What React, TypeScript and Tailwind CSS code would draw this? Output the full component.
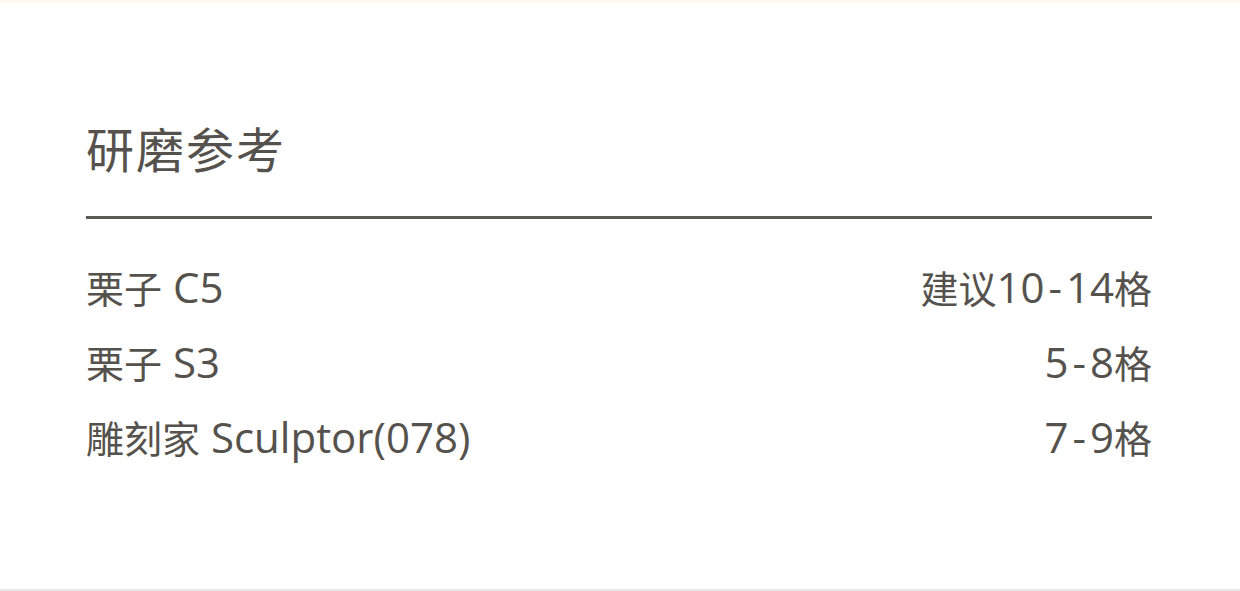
function Mixed({ text }: { text: string }) {
  const parts = text.match(/[\u3000-\u9fff]+|-|[^\u3000-\u9fff-]+/g) || [];
  return (
    <span>
      {parts.map((p, i) =>
        /[\u3000-\u9fff]/.test(p) ? (
          <span key={i} className="text-[38px]">{p}</span>
        ) : p === "-" ? (
          <span key={i} className="text-[42px] mx-[4px]" style={{ fontFamily: '"Open Sans", sans-serif' }}>{p}</span>
        ) : (
          <span key={i} className="text-[42px]" style={{ fontFamily: '"Open Sans", sans-serif' }}>{p}</span>
        )
      )}
    </span>
  );
}

export default function App() {
  const rows = [
    { l: "栗子 C5", r: "建议10-14格" },
    { l: "栗子 S3", r: "5-8格" },
    { l: "雕刻家 Sculptor(078)", r: "7-9格" },
  ];
  return (
    <div
      className="w-[1240px] h-[591px] bg-white flex flex-col border-t-[3px] border-t-[#fffaf0] border-b-2 border-b-[#e8e8e6] text-[#55524d]"
      style={{ fontFamily: '"Noto Sans CJK SC", "Noto Sans", sans-serif' }}
    >
      <div className="px-[86px] pt-[114px]">
        <div className="text-[48px] leading-[60px] tracking-[2px]">研磨参考</div>
        <div className="mt-[39px] h-[3px] bg-[#5d5a55] w-[1066px]" />
        <div className="mt-[35px] flex flex-col">
          {rows.map((r) => (
            <div key={r.l} className="flex justify-between items-center h-[75px] leading-[50px] pr-[2px]">
              <Mixed text={r.l} />
              <Mixed text={r.r} />
            </div>
          ))}
        </div>
      </div>
    </div>
  );
}
